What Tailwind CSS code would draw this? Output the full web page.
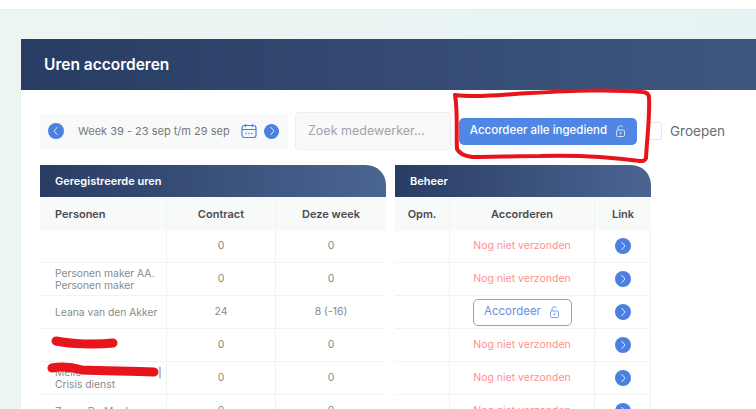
<!DOCTYPE html>
<html lang="en">
<head>
    <meta charset="UTF-8">
    <meta name="viewport" content="width=device-width, initial-scale=1.0">
    <title>Uren accorderen</title>
    <script src="https://cdn.jsdelivr.net/npm/@tailwindcss/browser@4"></script>
</head>
<body class="bg-white font-['Inter','Liberation_Sans',sans-serif] antialiased">
<div class="relative w-[756px] h-[409px] overflow-hidden bg-white">
    <!-- Top bar -->
    <div class="h-[10px] bg-white border-b border-[#e6eeec]"></div>

    <!-- Mint page background -->
    <div class="h-[399px] pt-[29px] pl-[21px] bg-gradient-to-r from-[#edf5f2] to-[#e6f3f4]">
        <div class="h-[370px] bg-white overflow-hidden">
            <div class="h-[51px] flex items-center pl-[23px] bg-gradient-to-r from-[#293d64] to-[#3f5780] text-white text-[15.5px] font-semibold">Uren accorderen</div>

            <!-- Toolbar -->
            <div class="flex items-center h-[75px] pt-[7px] pl-[19px]">
                <div class="w-[248px] h-[35px] flex items-center pl-[8px] bg-[#f8f9f9] text-[#77777a] text-[11px]">
                    <span class="w-4 h-4 rounded-full bg-[#4a80e0] flex items-center justify-center">
                        <svg class="w-2.5 h-2.5" viewBox="0 0 10 10" fill="none" stroke="#dbe6fa" stroke-width="1"><path d="M6.5 1 3 5l3.5 4"/></svg>
                    </span>
                    <span class="ml-[14px] w-[162px] whitespace-nowrap">Week 39 - 23 sep t/m 29 sep</span>
                    <svg class="w-4 h-4 ml-[1px]" viewBox="0 0 16 16" fill="none" stroke="#4a80e0" stroke-width="1.2"><rect x="1" y="2.5" width="14" height="12" rx="2.5"/><path d="M1 6.5h14M4.5 1v3M11.5 1v3"/><path d="M4.5 10.5h1.2M7.4 10.5h1.2M10.3 10.5h1.2" stroke-width="1.4"/></svg>
                    <span class="ml-[7px] w-[15px] h-[15px] rounded-full bg-[#4a80e0] flex items-center justify-center">
                        <svg class="w-2.5 h-2.5" viewBox="0 0 10 10" fill="none" stroke="#dbe6fa" stroke-width="1"><path d="M3.5 1 7 5 3.5 9"/></svg>
                    </span>
                </div>
                <div class="ml-[7px] w-[156px] h-[38px] flex items-center pl-[12px] bg-[#f9f9f9] border border-[#eeeeee] rounded text-[12.5px] text-[#a3a3a8]">Zoek medewerker...</div>
                <button class="ml-[8px] w-[178px] h-[27px] flex items-center justify-center gap-[8px] bg-[#5086e4] rounded-[5px] text-white text-[11.5px] font-medium">
                    Accordeer alle ingediend
                    <svg class="w-[11px] h-[12px]" viewBox="0 0 11 12" fill="none" stroke="#d5e2f9" stroke-width="1"><rect x="1.5" y="5" width="8" height="6.5" rx="1.2"/><path d="M3 5V3a2.4 2.4 0 0 1 4.6-.8"/><circle cx="5.5" cy="8.2" r=".7"/></svg>
                </button>
                <span class="ml-[11px] w-[14px] h-[18px] bg-white border border-[#e4e4e4] rounded-[3px]"></span>
                <span class="ml-[8px] text-[13.5px] text-[#6b6b70]">Groepen</span>
            </div>

            <!-- Tables -->
            <div class="flex pl-[19px] gap-[9px]">
                <div class="w-[346px]">
                    <div class="h-[32px] flex items-center pl-[15px] rounded-tr-[20px] bg-gradient-to-r from-[#293d64] to-[#4b6592] text-white text-[11px] font-semibold">Geregistreerde uren</div>
                    <div class="grid grid-cols-[127px_109px_110px] auto-rows-[33px] text-[10.5px] text-[#8a8a8e]">
                        <div class="h-[34px] flex items-center pl-[15px] bg-[#f8f9f9] border-r border-[#eef4f3] text-[11px] text-[#4b4b50] font-semibold">Personen</div>
                        <div class="h-[34px] flex items-center justify-center bg-[#f8f9f9] border-r border-[#eef4f3] text-[11px] text-[#4b4b50] font-semibold">Contract</div>
                        <div class="h-[34px] flex items-center justify-center bg-[#f8f9f9] text-[11px] text-[#4b4b50] font-semibold">Deze week</div>

                        <div class="flex items-center pl-[15px] border-r border-b border-[#eef4f3] leading-[12px] text-[10.3px]"></div>
                        <div class="flex items-center justify-center border-r border-b border-[#eef4f3]">0</div>
                        <div class="flex items-center justify-center border-b border-[#eef4f3]">0</div>

                        <div class="flex items-center pl-[15px] border-r border-b border-[#eef4f3] leading-[12px] text-[10.3px]">Personen maker AA.<br>Personen maker</div>
                        <div class="flex items-center justify-center border-r border-b border-[#eef4f3]">0</div>
                        <div class="flex items-center justify-center border-b border-[#eef4f3]">0</div>

                        <div class="flex items-center pl-[15px] border-r border-b border-[#eef4f3] leading-[12px] text-[10.3px]">Leana van den Akker</div>
                        <div class="flex items-center justify-center border-r border-b border-[#eef4f3]">24</div>
                        <div class="flex items-center justify-center border-b border-[#eef4f3]">8 (-16)</div>

                        <div class="flex items-center pl-[15px] border-r border-b border-[#eef4f3] leading-[12px] text-[10.3px]"></div>
                        <div class="flex items-center justify-center border-r border-b border-[#eef4f3]">0</div>
                        <div class="flex items-center justify-center border-b border-[#eef4f3]">0</div>

                        <div class="flex items-center pl-[15px] border-r border-b border-[#eef4f3] leading-[12px] text-[10.3px]">Melle<br>Crisis dienst</div>
                        <div class="flex items-center justify-center border-r border-b border-[#eef4f3]">0</div>
                        <div class="flex items-center justify-center border-b border-[#eef4f3]">0</div>

                        <div class="flex items-center pl-[15px] border-r border-b border-[#eef4f3] leading-[12px] text-[10.3px] whitespace-nowrap">Zenas De Meulenaere</div>
                        <div class="flex items-center justify-center border-r border-b border-[#eef4f3]">0</div>
                        <div class="flex items-center justify-center border-b border-[#eef4f3]">0</div>
                    </div>
                </div>

                <div class="w-[256px]">
                    <div class="h-[32px] flex items-center pl-[15px] rounded-tr-[20px] bg-gradient-to-r from-[#293d64] to-[#4b6592] text-white text-[11px] font-semibold">Beheer</div>
                    <div class="grid grid-cols-[55px_145px_56px] auto-rows-[33px] text-[10.5px] text-[#ff8f8f]">
                        <div class="h-[34px] flex items-center justify-center bg-[#f8f9f9] border-r border-[#eef4f3] text-[11px] text-[#4b4b50] font-semibold">Opm.</div>
                        <div class="h-[34px] flex items-center justify-center bg-[#f8f9f9] border-r border-[#eef4f3] text-[11px] text-[#4b4b50] font-semibold">Accorderen</div>
                        <div class="h-[34px] flex items-center justify-center bg-[#f8f9f9] text-[11px] text-[#4b4b50] font-semibold">Link</div>

                        <div class="border-r border-b border-[#eef4f3]"></div>
                        <div class="flex items-center justify-center border-r border-b border-[#eef4f3]">Nog niet verzonden</div>
                        <div class="flex items-center justify-center border-r border-b border-[#eef4f3]"><span class="w-4 h-4 rounded-full bg-[#4a80e0] flex items-center justify-center"><svg class="w-2.5 h-2.5" viewBox="0 0 10 10" fill="none" stroke="#dbe6fa" stroke-width="1"><path d="M3.5 1 7 5 3.5 9"/></svg></span></div>

                        <div class="border-r border-b border-[#eef4f3]"></div>
                        <div class="flex items-center justify-center border-r border-b border-[#eef4f3]">Nog niet verzonden</div>
                        <div class="flex items-center justify-center border-r border-b border-[#eef4f3]"><span class="w-4 h-4 rounded-full bg-[#4a80e0] flex items-center justify-center"><svg class="w-2.5 h-2.5" viewBox="0 0 10 10" fill="none" stroke="#dbe6fa" stroke-width="1"><path d="M3.5 1 7 5 3.5 9"/></svg></span></div>

                        <div class="border-r border-b border-[#eef4f3]"></div>
                        <div class="flex items-center justify-center border-r border-b border-[#eef4f3]">
                            <span class="w-[99px] h-[27px] flex items-center justify-center gap-[8px] border border-[#7ea4ea] rounded-[5px] text-[#6a8fe0] text-[11.5px]">Accordeer
                                <svg class="w-[11px] h-[12px]" viewBox="0 0 11 12" fill="none" stroke="#7ea4ea" stroke-width="1"><rect x="1.5" y="5" width="8" height="6.5" rx="1.2"/><path d="M3 5V3a2.4 2.4 0 0 1 4.6-.8"/><circle cx="5.5" cy="8.2" r=".7"/></svg>
                            </span>
                        </div>
                        <div class="flex items-center justify-center border-r border-b border-[#eef4f3]"><span class="w-4 h-4 rounded-full bg-[#4a80e0] flex items-center justify-center"><svg class="w-2.5 h-2.5" viewBox="0 0 10 10" fill="none" stroke="#dbe6fa" stroke-width="1"><path d="M3.5 1 7 5 3.5 9"/></svg></span></div>

                        <div class="border-r border-b border-[#eef4f3]"></div>
                        <div class="flex items-center justify-center border-r border-b border-[#eef4f3]">Nog niet verzonden</div>
                        <div class="flex items-center justify-center border-r border-b border-[#eef4f3]"><span class="w-4 h-4 rounded-full bg-[#4a80e0] flex items-center justify-center"><svg class="w-2.5 h-2.5" viewBox="0 0 10 10" fill="none" stroke="#dbe6fa" stroke-width="1"><path d="M3.5 1 7 5 3.5 9"/></svg></span></div>

                        <div class="border-r border-b border-[#eef4f3]"></div>
                        <div class="flex items-center justify-center border-r border-b border-[#eef4f3]">Nog niet verzonden</div>
                        <div class="flex items-center justify-center border-r border-b border-[#eef4f3]"><span class="w-4 h-4 rounded-full bg-[#4a80e0] flex items-center justify-center"><svg class="w-2.5 h-2.5" viewBox="0 0 10 10" fill="none" stroke="#dbe6fa" stroke-width="1"><path d="M3.5 1 7 5 3.5 9"/></svg></span></div>

                        <div class="border-r border-b border-[#eef4f3]"></div>
                        <div class="flex items-center justify-center border-r border-b border-[#eef4f3]">Nog niet verzonden</div>
                        <div class="flex items-center justify-center border-r border-b border-[#eef4f3]"><span class="w-4 h-4 rounded-full bg-[#4a80e0] flex items-center justify-center"><svg class="w-2.5 h-2.5" viewBox="0 0 10 10" fill="none" stroke="#dbe6fa" stroke-width="1"><path d="M3.5 1 7 5 3.5 9"/></svg></span></div>
                    </div>
                </div>
            </div>
        </div>
    </div>

    <!-- Red marker annotations on top of the screenshot -->
    <svg class="absolute inset-0 w-[756px] h-[409px] pointer-events-none" viewBox="0 0 756 409" fill="none" stroke="#e8141c" stroke-linecap="round" stroke-linejoin="round">
        <path stroke-width="4" d="M455 95c25 3 50-1 75-2 40-2 80-4 112-1 5 0 7 2 7 6 1 18-2 40-3 60-1 3-3 3-6 3-30-4-65-6-100-5-25 0-48 1-68 1-7-1-13-4-15-8-1-18 1-36-2-54z"/>
        <path stroke-width="9" d="M56 341c15 3 40 4 57 2"/>
        <path stroke-width="9" d="M52 368c10-2 20-1 30 2 25 1 50 1 72 2"/>
        <path stroke="#5b7fd6" stroke-width="1" d="M160 367v11"/>
    </svg>
</div>
</body>
</html>
